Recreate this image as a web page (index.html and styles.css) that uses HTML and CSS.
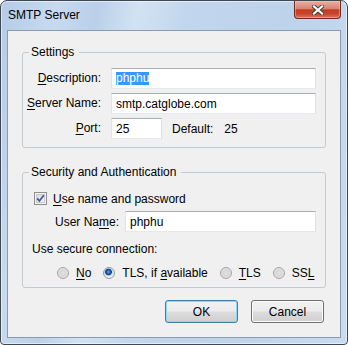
FILE: index.html
```html
<!DOCTYPE html>
<html lang="en">
<head>
    <meta charset="UTF-8">
    <title>SMTP Server</title>
    <link rel="stylesheet" href="styles.css">
</head>
<body>

    <!-- Dialog window -->
    <div class="window">
        <div class="titlebar">
            <span class="title">SMTP Server</span>
            <div class="close-btn">
                <svg width="12" height="10" viewBox="0 0 12 10">
                    <path d="M2 1.5 L10 8.5 M10 1.5 L2 8.5" stroke="#3d3d3d" stroke-width="4" stroke-linecap="square"/>
                    <path d="M2 1.5 L10 8.5 M10 1.5 L2 8.5" stroke="#ffffff" stroke-width="2.2" stroke-linecap="square"/>
                </svg>
            </div>
        </div>

        <div class="client">
            <!-- Settings group -->
            <fieldset class="group">
                <legend>Settings</legend>
                <div class="form-grid">
                    <label class="field-label"><u>D</u>escription:</label>
                    <div class="textbox"><span class="selected">phphu</span></div>

                    <label class="field-label"><u>S</u>erver Name:</label>
                    <div class="textbox">smtp.catglobe.com</div>

                    <label class="field-label"><u>P</u>ort:</label>
                    <div class="port-row">
                        <div class="textbox port">25</div>
                        <span class="default-label">Default:</span>
                        <span class="default-value">25</span>
                    </div>
                </div>
            </fieldset>

            <!-- Security group -->
            <fieldset class="group group-security">
                <legend>Security and Authentication</legend>
                <div class="security-body">
                    <div class="check-row">
                        <span class="checkbox">
                            <svg width="13" height="13" viewBox="0 0 13 13">
                                <defs>
                                    <linearGradient id="cbfill" x1="0" y1="0" x2="1" y2="1">
                                        <stop offset="0" stop-color="#d8d8d8"/>
                                        <stop offset="1" stop-color="#f7f7f7"/>
                                    </linearGradient>
                                </defs>
                                <rect x="0.5" y="0.5" width="12" height="12" fill="#f4f4f4" stroke="#8e8f8f"/>
                                <rect x="2.5" y="2.5" width="8" height="8" fill="url(#cbfill)" stroke="#c8c8c8"/>
                                <path d="M3.2 6.4 L5.4 9 L9.8 3.2" fill="none" stroke="#3f54a0" stroke-width="1.7"/>
                            </svg>
                        </span>
                        <span><u>U</u>se name and password</span>
                    </div>

                    <div class="user-row">
                        <label class="user-label">User Na<u>m</u>e:</label>
                        <div class="textbox user-box">phphu</div>
                    </div>

                    <div class="secure-label">Use secure connection:</div>

                    <div class="radio-row">
                        <span class="radio-item"><span class="radio"></span><span><u>N</u>o</span></span>
                        <span class="radio-item"><span class="radio checked"></span><span>TLS, if <u>a</u>vailable</span></span>
                        <span class="radio-item"><span class="radio"></span><span><u>T</u>LS</span></span>
                        <span class="radio-item"><span class="radio"></span><span>SS<u>L</u></span></span>
                    </div>
                </div>
            </fieldset>

            <!-- Dialog buttons -->
            <div class="button-row">
                <button class="dlg-button default">OK</button>
                <button class="dlg-button">Cancel</button>
            </div>
        </div>
    </div>

</body>
</html>
```

FILE: styles.css
```css
/* General Styles */
body {
    margin: 0;
    background-color: #ffffff;
    font-family: "Liberation Sans", Arial, sans-serif;
    font-size: 12px;
    color: #000000;
}

u {
    text-underline-offset: 2px;
}

/* Window frame */
.window {
    width: 348px;
    height: 345px;
    box-sizing: border-box;
    border: 1px solid #3e4753;
    border-radius: 7px 7px 4px 4px;
    padding: 0 6px 6px 6px;
    display: flex;
    flex-direction: column;
    background: linear-gradient(100deg, #b4cce6 0%, #c7daef 14%, #bad0e9 24%, #d2e2f3 34%, #c2d7ed 46%, #bdd3ea 70%, #c8dbf0 100%);
    box-shadow: inset 0 0 0 1px rgba(255, 255, 255, 0.55);
}

.titlebar {
    height: 29px;
    display: flex;
    justify-content: space-between;
    align-items: flex-start;
    flex: none;
}

.title {
    margin: 7px 0 0 1px;
    line-height: 15px;
    color: #000;
}

.close-btn {
    width: 47px;
    height: 18px;
    box-sizing: border-box;
    border: 1px solid #6d2b22;
    border-top: none;
    border-radius: 0 0 4px 4px;
    display: flex;
    align-items: center;
    justify-content: center;
    background: linear-gradient(#eab0a2 0%, #d98472 45%, #c43b22 52%, #c8442b 75%, #df7459 100%);
    box-shadow: inset 0 0 0 1px rgba(255, 200, 190, 0.45);
}

/* Client area */
.client {
    flex: 1;
    border: 1px solid #8a9bb0;
    background-color: #f0f0f0;
    display: flex;
    flex-direction: column;
}

/* Group boxes */
.group {
    margin: 13px 14px 0 14px;
    padding: 0;
    border: 1px solid #c3cad0;
    border-radius: 3px;
    min-inline-size: 0;
}

.group legend {
    margin-left: 6px;
    padding: 0 5px 0 2px;
    line-height: 16px;
}

.group-security {
    margin-top: 16px;
}

.form-grid {
    display: grid;
    grid-template-columns: 78px 205px;
    column-gap: 10px;
    row-gap: 4px;
    padding: 8px 9px 8px 0;
}

.field-label {
    justify-self: end;
    align-self: center;
    line-height: 15px;
    white-space: nowrap;
}

.textbox {
    height: 21px;
    box-sizing: border-box;
    border: 1px solid;
    border-color: #abadb3 #dbdfe6 #e3e9ef #e2e3ea;
    background-color: #ffffff;
    padding: 0 4px;
    display: flex;
    align-items: center;
    white-space: nowrap;
}

.selected {
    background-color: #3399ff;
    color: #ffffff;
    line-height: 13px;
}

.port-row {
    display: flex;
    align-items: center;
    white-space: nowrap;
}

.textbox.port {
    width: 51px;
}

.default-label {
    margin-left: 10px;
}

.default-value {
    margin-left: 11px;
}

/* Security section */
.security-body {
    padding: 11px 9px 7px 9px;
}

.check-row {
    display: flex;
    align-items: center;
    height: 15px;
    margin-left: 2px;
    gap: 6px;
    white-space: nowrap;
}

.checkbox {
    display: flex;
    width: 13px;
    height: 13px;
}

.user-row {
    display: flex;
    align-items: center;
    margin-top: 5px;
    padding-left: 23px;
}

.user-label {
    width: 70px;
    flex: none;
    white-space: nowrap;
}

.user-box {
    flex: 1;
}

.secure-label {
    margin-top: 10px;
    line-height: 15px;
}

.radio-row {
    display: flex;
    align-items: center;
    gap: 12px;
    margin-top: 8px;
    padding-left: 25px;
    height: 15px;
    white-space: nowrap;
}

.radio-item {
    display: inline-flex;
    align-items: center;
    gap: 7px;
    flex: none;
}

.radio {
    width: 12px;
    height: 12px;
    box-sizing: border-box;
    border-radius: 50%;
    border: 1px solid #a3a3a3;
    background: radial-gradient(circle at 50% 50%, #e2e2e2 0%, #d6d6d6 45%, #f5f5f5 100%);
}

.radio.checked {
    border-color: #8f98a3;
    background: radial-gradient(circle at 45% 40%, #6aa6e6 0, #1d5397 2.2px, #0f3a73 3px, #b9cfe8 3.6px, #eef3f9 5px);
}

/* Buttons */
.button-row {
    display: flex;
    justify-content: flex-end;
    gap: 13px;
    margin: 12px 16px 0 0;
}

.dlg-button {
    width: 73px;
    height: 23px;
    font-family: inherit;
    font-size: 12px;
    color: #000;
    border: 1px solid #707070;
    border-radius: 3px;
    padding: 0;
    background: linear-gradient(#f2f2f2 0%, #ebebeb 48%, #dddddd 52%, #cfcfcf 100%);
    box-shadow: inset 0 0 0 1px #fbfbfb;
}

.dlg-button.default {
    border-color: #3c7fb1;
    box-shadow: inset 0 0 0 1px #8fd6f6;
}
```
